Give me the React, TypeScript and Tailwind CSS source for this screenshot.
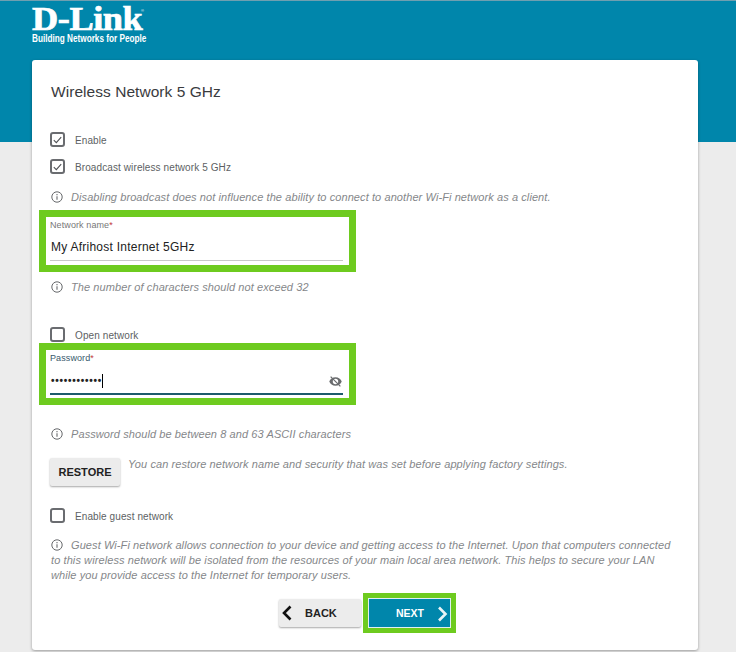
import React from "react";

const Check = ({ checked }: { checked?: boolean }) => (
  <span className="flex h-[15px] w-[15px] shrink-0 items-center justify-center rounded-[3px] border-2 border-[#6a6c70] bg-white">
    {checked && (
      <svg width="9" height="8" viewBox="0 0 9 8" fill="none">
        <path d="M0.8 4.2 3.3 6.6 8.2 1.2" stroke="#4f5155" strokeWidth="1.1" />
      </svg>
    )}
  </span>
);

const CheckRow = ({ label, checked, className }: { label: string; checked?: boolean; className: string }) => (
  <div className={`flex h-[15px] items-center gap-[10px] text-[10px] tracking-[0.1px] text-[#5d5f63] ${className}`}>
    <Check checked={checked} />
    <span className="pt-[2px]">{label}</span>
  </div>
);

const Info = () => (
  <svg width="12" height="12" viewBox="0 0 12 12" fill="none" className="shrink-0">
    <circle cx="6" cy="6" r="5.2" stroke="#66686b" strokeWidth="1" />
    <path d="M6 5.2v3.6" stroke="#66686b" strokeWidth="1.1" />
    <path d="M6 3v1.2" stroke="#66686b" strokeWidth="1.1" />
  </svg>
);

const Hint = ({ text, className }: { text: string; className: string }) => (
  <div className={`flex h-[14px] items-center gap-[8px] pl-px text-[11px] italic tracking-[0.09px] text-[#85878a] ${className}`}>
    <Info />
    <span className="whitespace-nowrap">{text}</span>
  </div>
);

export default function App() {
  return (
    <div className="h-[652px] w-[736px] overflow-hidden bg-[#ececec] font-['Liberation_Sans',sans-serif]">
      <header className="h-[142px] border-t border-t-[#6f9fb0] bg-[#0086ab] pl-[32px] text-white">
        <div className="relative mt-[6px] flex h-[25px] w-[114px] items-start">
          <span className="origin-left scale-x-[1.1] font-['Liberation_Serif',serif] text-[33px] font-bold leading-[25px] tracking-[-0.4px] [-webkit-text-stroke:0.7px_white]">
            D-Link
          </span>
          <span className="absolute left-[109px] top-px text-[4px] leading-[5px]">®</span>
        </div>
        <div className="origin-left scale-x-[0.745] whitespace-nowrap text-[11px] font-bold leading-[12px]">
          Building Networks for People
        </div>
      </header>

      <main className="relative mx-[32px] -mt-[82px] h-[590px] w-[666px] rounded-[3px] bg-white pl-[18px] pt-[22px] shadow-[0_1px_3px_rgba(0,0,0,0.35)]">
        <h1 className="ml-px h-[18px] text-[15.5px] leading-[19px] tracking-[0.05px] text-[#3a3b3e]">Wireless Network 5 GHz</h1>

        <CheckRow className="mt-[32px]" checked label="Enable" />
        <CheckRow className="mt-[12px]" checked label="Broadcast wireless network 5 GHz" />
        <Hint className="mt-[16px]" text="Disabling broadcast does not influence the ability to connect to another Wi-Fi network as a client." />

        <div className="-ml-[11px] mt-[6px] h-[62px] w-[317px] border-[7px] border-[#6ecb1f] pl-[4px] pr-[6px] pt-[3px]">
          <div className="text-[9px] leading-[11px] tracking-[0.1px] text-[#777]">
            Network name<span className="text-[#c23a3a]">*</span>
          </div>
          <div className="mt-[7px] h-[23px] border-b border-b-[#c8c8c8] pl-px text-[12px] leading-[18px] tracking-[0.25px] text-[#222]">
            My Afrihost Internet 5GHz
          </div>
        </div>

        <Hint className="mt-[8px]" text="The number of characters should not exceed 32" />

        <CheckRow className="mt-[33px]" label="Open network" />

        <div className="-ml-[11px] mt-[1px] h-[62px] w-[317px] border-[7px] border-[#6ecb1f] pl-[4px] pr-[6px] pt-[3px]">
          <div className="text-[9px] leading-[11px] tracking-[0.1px] text-[#37596b]">
            Password<span className="text-[#c23a3a]">*</span>
          </div>
          <div className="mt-[6px] flex h-[25px] items-start justify-between border-b-2 border-b-[#1c5b6b]">
            <div className="flex h-[22px] items-center pl-px">
              <span className="text-[10px] font-bold leading-[14px] tracking-[0.75px] text-[#222]">••••••••••••</span>
              <span className="-ml-[0.5px] h-[14px] w-px bg-black" />
            </div>
            <svg width="13" height="11" viewBox="0 0 24 20" className="mr-px mt-[6px]" fill="#6a6c6e">
              <path d="M12 2C6.5 2 2.2 5.3 0.5 10c1.7 4.7 6 8 11.5 8s9.8-3.3 11.5-8C21.8 5.3 17.5 2 12 2zm0 13a5 5 0 1 1 0-10 5 5 0 0 1 0 10z" />
              <path d="M3 1 21 19" stroke="#6a6c6e" strokeWidth="2.4" />
            </svg>
          </div>
        </div>

        <Hint className="mt-[22px]" text="Password should be between 8 and 63 ASCII characters" />

        <div className="mt-[17px] flex items-start gap-[8px]">
          <button className="h-[28px] w-[70px] rounded-[2px] bg-[#ececec] text-[11px] font-bold text-[#222] shadow-[0_1px_2px_rgba(0,0,0,0.35)]">
            RESTORE
          </button>
          <p className="text-[11px] italic leading-[12px] tracking-[0.09px] text-[#85878a]">
            You can restore network name and security that was set before applying factory settings.
          </p>
        </div>

        <CheckRow className="mt-[22px]" label="Enable guest network" />

        <p className="mt-[15px] w-[626px] pl-px text-[11px] italic leading-[15px] tracking-[0.09px] text-[#85878a]">
          <span className="mr-[8px] inline-block align-[-2px]"><Info /></span>
          Guest Wi-Fi network allows connection to your device and getting access to the Internet. Upon that computers connected to this wireless network will be isolated from the resources of your main local area network. This helps to secure your LAN while you provide access to the Internet for temporary users.
        </p>

        <div className="ml-[229px] mt-[10px] flex items-center gap-[2px]">
          <button className="flex h-[28px] w-[82px] items-center rounded-[2px] bg-[#ececec] pl-[2px] text-[11px] font-bold text-[#222] shadow-[0_1px_2px_rgba(0,0,0,0.35)]">
            <svg width="12" height="16" viewBox="0 0 12 16" fill="none"><path d="M9.5 1.5 3 8l6.5 6.5" stroke="#111" strokeWidth="2.6" /></svg>
            <span className="ml-[12px]">BACK</span>
          </button>
          <div className="border-[5px] border-[#6ecb1f]">
            <button className="flex h-[30px] w-[83px] items-center border border-[#dfeef3] bg-[#0086ab] pl-[27px] pt-px text-[10.5px] font-bold text-white">
              <span>NEXT</span>
              <svg width="12" height="16" viewBox="0 0 12 16" fill="none" className="ml-[12px]"><path d="M3 1.5 9.5 8 3 14.5" stroke="#e9f4f7" strokeWidth="2.6" /></svg>
            </button>
          </div>
        </div>
      </main>
    </div>
  );
}
